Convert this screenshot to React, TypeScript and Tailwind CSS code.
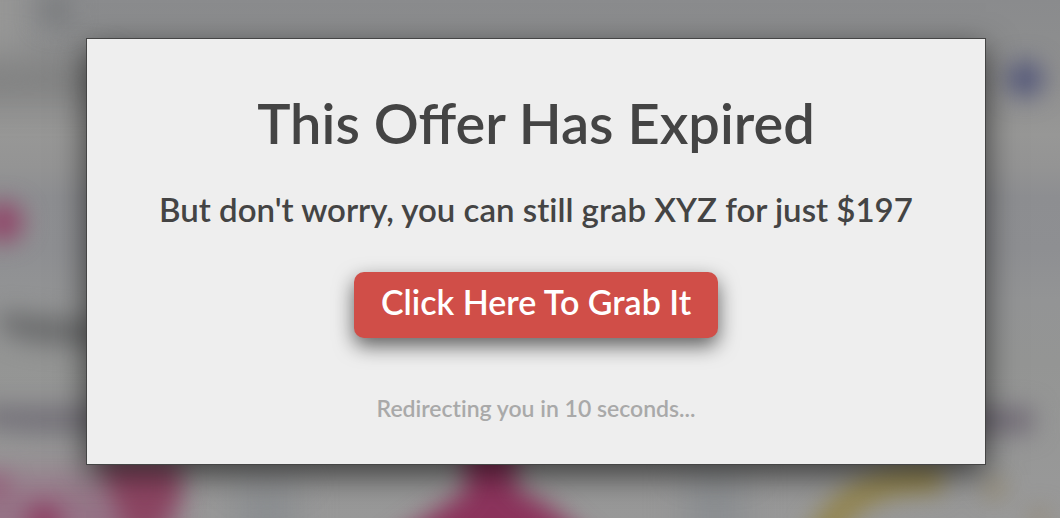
function Backdrop() {
  return (
    <svg
      aria-hidden="true"
      className="absolute inset-0 h-full w-full"
      viewBox="0 0 1060 518"
      preserveAspectRatio="xMidYMid slice"
    >
      <defs>
        <linearGradient id="page" x1="0" y1="0" x2="0" y2="1">
          <stop offset="0" stopColor="#8a8b8d" />
          <stop offset="0.07" stopColor="#8c8d8e" />
          <stop offset="0.15" stopColor="#8f8f8f" />
          <stop offset="0.26" stopColor="#979796" />
          <stop offset="0.32" stopColor="#949494" />
          <stop offset="0.38" stopColor="#8d8e91" />
          <stop offset="0.48" stopColor="#8e8f92" />
          <stop offset="0.58" stopColor="#939495" />
          <stop offset="0.7" stopColor="#949594" />
          <stop offset="1" stopColor="#999999" />
        </linearGradient>
        <filter
          id="soft"
          filterUnits="userSpaceOnUse"
          x="-150"
          y="-150"
          width="1360"
          height="820"
          colorInterpolationFilters="sRGB"
        >
          <feGaussianBlur stdDeviation="12" />
        </filter>
        <filter
          id="wide"
          filterUnits="userSpaceOnUse"
          x="-150"
          y="-150"
          width="1360"
          height="820"
          colorInterpolationFilters="sRGB"
        >
          <feGaussianBlur stdDeviation="18" />
        </filter>
      </defs>
      <rect width="1060" height="518" fill="url(#page)" />
      <g filter="url(#wide)">
        <rect x="-60" y="-40" width="85" height="95" fill="#979796" />
        <rect x="-60" y="66" width="170" height="28" fill="#7c7d7d" />
        <rect x="-60" y="476" width="235" height="90" fill="#967487" />
        <rect x="238" y="480" width="58" height="80" fill="#8b8e91" />
        <rect x="686" y="470" width="58" height="90" fill="#8b8e91" />
      </g>
      <g filter="url(#soft)">
        <circle cx="56" cy="11" r="16" fill="#7a7c7e" />
        <circle cx="1025" cy="79" r="18" fill="#52567a" />
        <circle cx="3" cy="222" r="20" fill="#914468" />
        <path d="M0 312L100 322V346L30 342L0 330Z" fill="#6a6b6c" />
        <path d="M-20 406H110V433H30L-20 427Z" fill="#747179" />
        <path d="M960 408H1033V433H960Z" fill="#716b76" />
        <path d="M100 460H180V498L160 535H125Z" fill="#8c4562" />
        <circle cx="44" cy="522" r="18" fill="#8c3a5f" />
        <circle cx="-4" cy="486" r="12" fill="#935573" />
        <path
          d="M464 440H516V487L552 508L600 550H380L440 508L466 490Z"
          fill="#8c335c"
        />
        <path
          d="M818 542C844 496 878 475 942 479"
          fill="none"
          stroke="#93844a"
          strokeWidth="27"
        />
        <circle cx="994" cy="488" r="9" fill="#94855f" />
        <circle cx="1040" cy="519" r="9" fill="#92836a" />
      </g>
    </svg>
  );
}

export default function App() {
  return (
    <main className="relative min-h-screen overflow-hidden bg-[#929394] pt-[38px] pr-[74px] pb-[53px] pl-[86px] font-['Lato','Open_Sans',sans-serif]">
      <Backdrop />
      <section
        role="dialog"
        aria-labelledby="offer-title"
        className="relative flex flex-col items-center border border-[#454545] bg-[#eeeeee] px-6 pt-[50px] pb-10 text-center text-[#444444] shadow-[0_10px_30px_rgba(0,0,0,0.6)]"
      >
        <h1
          id="offer-title"
          className="text-[56px] leading-[68px] font-semibold"
        >
          This Offer Has Expired
        </h1>
        <p className="mt-8 text-[33px] leading-10 font-semibold [font-variant-ligatures:none]">
          But don't worry, you can still grab XYZ for just $197
        </p>
        <button
          type="button"
          className="mt-[43px] cursor-pointer rounded-[10px] bg-[#d04e48] px-[27px] pt-[10px] pb-4 text-[34px] leading-10 font-semibold text-white shadow-[0_8px_20px_rgba(0,0,0,0.6)]"
        >
          Click Here To Grab It
        </button>
        <p className="mt-[54px] text-[23px] leading-8 font-semibold text-[#a9a9a9] [font-variant-ligatures:none]">
          Redirecting you in 10 seconds...
        </p>
      </section>
    </main>
  );
}
